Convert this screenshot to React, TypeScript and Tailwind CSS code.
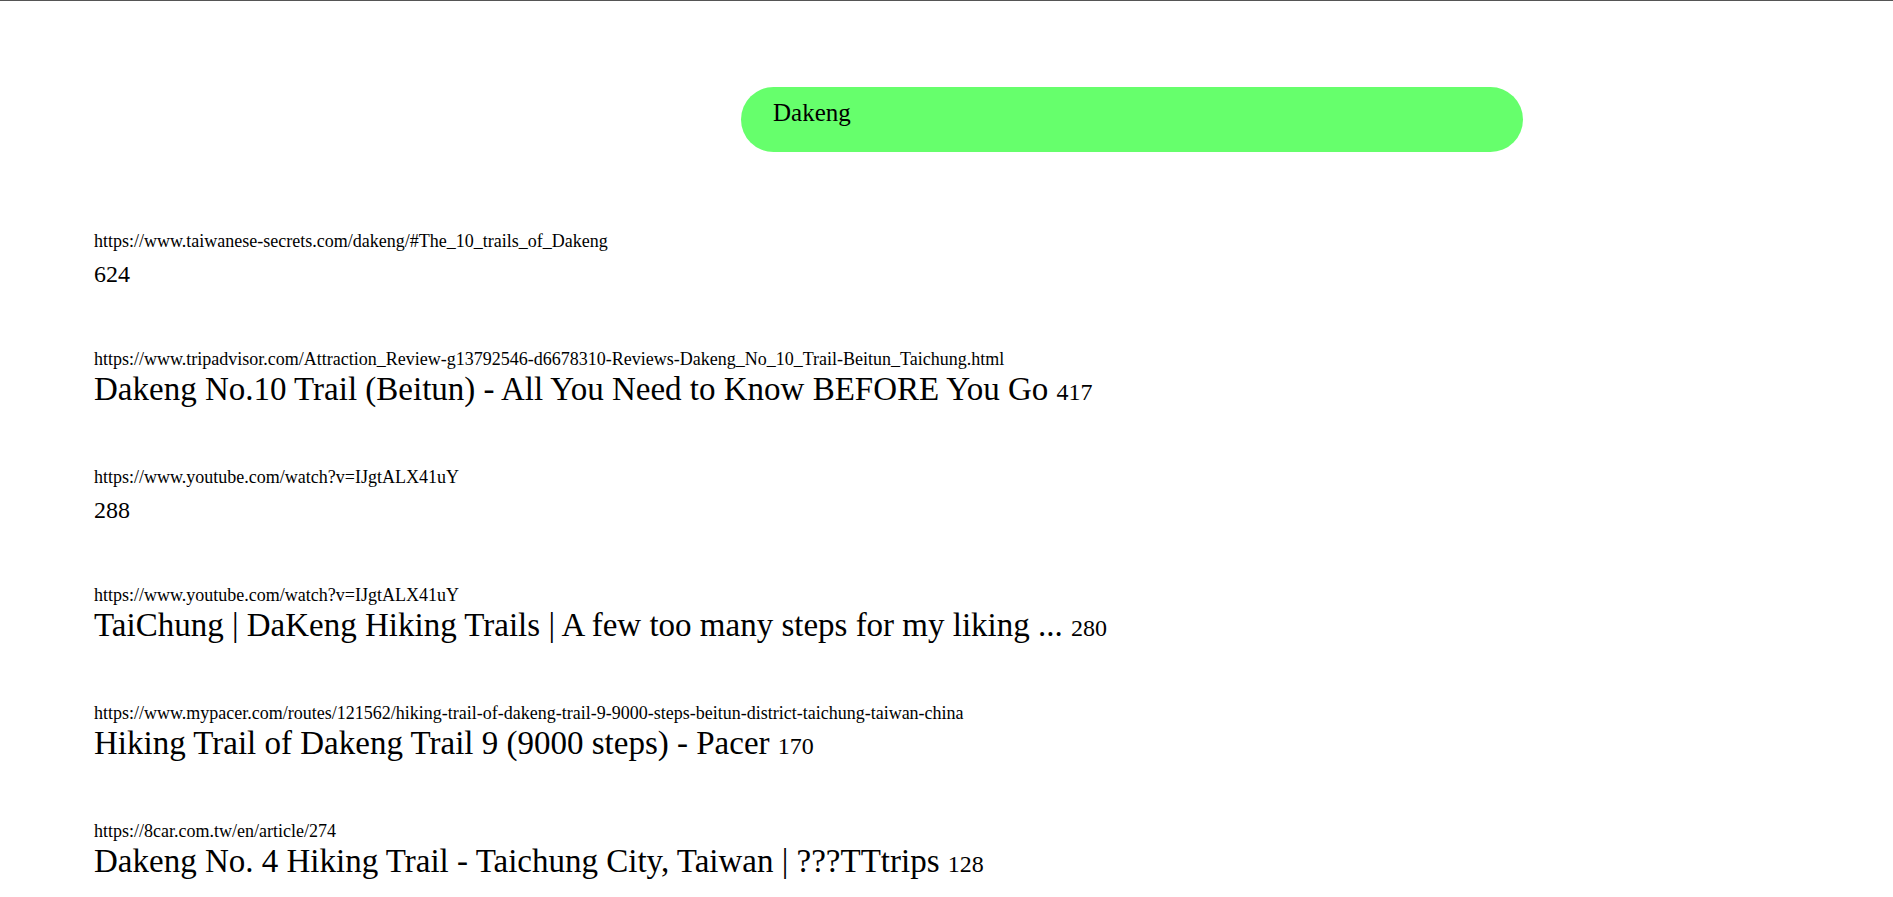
import React from "react";

type Result = {
  url: string;
  title: string;
  count: number;
};

const results: Result[] = [
  {
    url: "https://www.taiwanese-secrets.com/dakeng/#The_10_trails_of_Dakeng",
    title: "",
    count: 624,
  },
  {
    url: "https://www.tripadvisor.com/Attraction_Review-g13792546-d6678310-Reviews-Dakeng_No_10_Trail-Beitun_Taichung.html",
    title: "Dakeng No.10 Trail (Beitun) - All You Need to Know BEFORE You Go",
    count: 417,
  },
  {
    url: "https://www.youtube.com/watch?v=IJgtALX41uY",
    title: "",
    count: 288,
  },
  {
    url: "https://www.youtube.com/watch?v=IJgtALX41uY",
    title: "TaiChung | DaKeng Hiking Trails | A few too many steps for my liking ...",
    count: 280,
  },
  {
    url: "https://www.mypacer.com/routes/121562/hiking-trail-of-dakeng-trail-9-9000-steps-beitun-district-taichung-taiwan-china",
    title: "Hiking Trail of Dakeng Trail 9 (9000 steps) - Pacer",
    count: 170,
  },
  {
    url: "https://8car.com.tw/en/article/274",
    title: "Dakeng No. 4 Hiking Trail - Taichung City, Taiwan | ???TTtrips",
    count: 128,
  },
];

function ResultItem({ result }: { result: Result }) {
  return (
    <li className="flex flex-col">
      <p className="text-[18px] leading-[20px]">{result.url}</p>
      <p className="mt-[2px] h-[37px] text-[33px] leading-[37px]">
        {result.title && <span>{result.title} </span>}
        <span className="text-[24px] leading-[24px]">{result.count}</span>
      </p>
    </li>
  );
}

export default function App() {
  return (
    <div
      className="min-h-screen border-t border-[#555555] bg-white text-black"
      style={{ fontFamily: '"Liberation Serif", "Times New Roman", serif' }}
    >
      <div className="pt-[86px]">
        <div className="ml-[741px] h-[65px] w-[782px] rounded-full bg-[#66ff6c] pl-[32px] pt-[12px] text-[25px] leading-[28px]">
          Dakeng
        </div>
      </div>

      <ul className="mt-[79px] flex flex-col gap-[59px] pl-[94px]">
        {results.map((r, i) => (
          <ResultItem key={i} result={r} />
        ))}
      </ul>
    </div>
  );
}
